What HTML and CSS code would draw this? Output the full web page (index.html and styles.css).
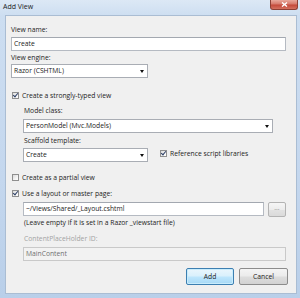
FILE: index.html
```html
<!DOCTYPE html>
<html lang="en">
<head>
    <meta charset="UTF-8">
    <meta name="viewport" content="width=device-width, initial-scale=1.0">
    <title>Add View</title>
    <link rel="stylesheet" href="styles.css">
</head>
<body>
    <div class="window">
        <div class="titlebar">
            <span class="title">Add View</span>
            <span class="close">
                <svg width="7" height="5" viewBox="0 0 7 5"><path d="M1 0.5 L6 4.5 M6 0.5 L1 4.5" stroke="#fff" stroke-width="1.4"/></svg>
            </span>
        </div>
        <div class="client">
            <div class="label first">View name:</div>
            <div class="textbox">Create</div>

            <div class="label">View engine:</div>
            <div class="select engine"><span>Razor (CSHTML)</span><i class="arrow"></i></div>

            <div class="check-row strongly">
                <span class="checkbox checked"></span>
                <span>Create a strongly-typed view</span>
            </div>

            <div class="indent">
                <div class="label model-label">Model class:</div>
                <div class="select combo"><span>PersonModel (Mvc.Models)</span><i class="arrow"></i></div>

                <div class="label">Scaffold template:</div>
                <div class="scaffold-row">
                    <div class="select scaffold"><span>Create</span><i class="arrow"></i></div>
                    <div class="check-row ref">
                        <span class="checkbox checked"></span>
                        <span>Reference script libraries</span>
                    </div>
                </div>
            </div>

            <div class="check-row partial">
                <span class="checkbox"></span>
                <span>Create as a partial view</span>
            </div>
            <div class="check-row layout">
                <span class="checkbox checked"></span>
                <span>Use a layout or master page:</span>
            </div>

            <div class="indent">
                <div class="layout-row">
                    <div class="textbox layout-box">~/Views/Shared/_Layout.cshtml</div>
                    <div class="browse">...</div>
                </div>
                <div class="label hint">(Leave empty if it is set in a Razor _viewstart file)</div>
                <div class="label disabled placeholder-label">ContentPlaceHolder ID:</div>
                <div class="textbox disabled-box">MainContent</div>
            </div>

            <div class="buttons">
                <div class="button default">Add</div>
                <div class="button">Cancel</div>
            </div>
        </div>
    </div>
</body>
</html>
```

FILE: styles.css
```css
body {
    margin: 0;
    padding: 0;
    font-family: "Open Sans", "Noto Sans", sans-serif;
    font-size: 6.75px;
    color: #222;
}

.window {
    width: 300px;
    height: 298px;
    display: flex;
    flex-direction: column;
    background: linear-gradient(to bottom, #dce8f5 0, #cddef1 16px, #c4d7ee 60%, #b9cfe9 100%);
    overflow: hidden;
}

.titlebar {
    height: 15px;
    display: flex;
    justify-content: space-between;
    align-items: flex-start;
}

.title {
    padding: 2px 0 0 3px;
    font-size: 7px;
    line-height: 10px;
    color: #1a1a1a;
}

.close {
    width: 26px;
    height: 9px;
    margin-right: 2px;
    display: flex;
    align-items: center;
    justify-content: center;
    border: 1px solid #8d4034;
    border-top: none;
    border-radius: 0 0 3px 3px;
    background: linear-gradient(to bottom, #e9a99c 0, #d77a6b 45%, #c44a3a 55%, #d4705f 100%);
}

.client {
    height: 279px;
    margin: 0 3px 4px 5px;
    padding: 9px 10px 0 5px;
    box-sizing: border-box;
    border: 1px solid #aabdd3;
    background-color: #f0f0f0;
}

.label {
    line-height: 9px;
    height: 9px;
    margin-top: 2px;
    white-space: nowrap;
}

.label.first {
    margin-top: 0;
}

.textbox {
    height: 14px;
    margin-top: 3px;
    padding: 0 2px;
    box-sizing: border-box;
    border: 1px solid #b5bac2;
    border-top-color: #a3a8b0;
    background-color: #fff;
    line-height: 12px;
    white-space: nowrap;
}

.select {
    height: 14px;
    margin-top: 2px;
    padding: 0 3px 0 2px;
    box-sizing: border-box;
    display: flex;
    justify-content: space-between;
    align-items: center;
    border: 1px solid #a9adb4;
    background-color: #fff;
    line-height: 12px;
    white-space: nowrap;
}

.select.engine {
    width: 137px;
}

.arrow {
    width: 0;
    height: 0;
    border-left: 2px solid transparent;
    border-right: 2px solid transparent;
    border-top: 3px solid #111;
}

.check-row {
    display: flex;
    align-items: flex-start;
    line-height: 9px;
    height: 9px;
    white-space: nowrap;
}

.check-row > span:last-child {
    margin-left: 3px;
}

.checkbox {
    width: 7px;
    height: 7px;
    margin-top: 1px;
    box-sizing: border-box;
    border: 1px solid #8f8f8f;
    background: linear-gradient(135deg, #dcdcdc 0, #f4f4f4 60%, #fff 100%);
    position: relative;
}

.checkbox.checked::after {
    content: "";
    position: absolute;
    left: 1px;
    top: -1px;
    width: 2px;
    height: 4px;
    border-right: 1.2px solid #2d3f66;
    border-bottom: 1.2px solid #2d3f66;
    transform: rotate(40deg);
}

.check-row.strongly {
    margin: 13px 0 0 1px;
}

.indent {
    margin-left: 12px;
}

.label.model-label {
    margin-top: 6px;
    padding-left: 1px;
}

.indent .label {
    padding-left: 1px;
    margin-top: 3px;
}

.indent .label.model-label {
    margin-top: 6px;
}

.select.combo {
    margin: 4px 13px 0 0;
}

.scaffold-row {
    display: flex;
    align-items: flex-start;
    margin-top: 3px;
}

.scaffold-row .select {
    margin-top: 0;
}

.select.scaffold {
    width: 125px;
}

.check-row.ref {
    margin: 1px 0 0 12px;
}

.check-row.partial {
    margin: 11px 0 0 1px;
}

.check-row.layout {
    margin: 7px 0 0 1px;
}

.layout-row {
    display: flex;
    gap: 4px;
    margin-top: 4px;
    height: 15px;
}

.layout-box {
    flex: 1;
    margin-top: 0;
}

.browse {
    width: 18px;
    height: 15px;
    box-sizing: border-box;
    border: 1px solid #b3b3b3;
    border-radius: 2px;
    background: linear-gradient(to bottom, #f6f6f6 0, #ececec 50%, #e2e2e2 51%, #dadada 100%);
    color: #8a8a8a;
    text-align: center;
    line-height: 10px;
}

.indent .label.hint {
    margin-top: 1px;
}

.indent .label.placeholder-label {
    margin-top: 7px;
}

.disabled {
    color: #a3a3a3;
}

.textbox.disabled-box {
    margin-top: 4px;
    border-color: #c9c9c9;
    background-color: #f2f2f2;
    color: #707070;
}

.buttons {
    display: flex;
    justify-content: flex-end;
    gap: 5px;
    margin: 7px -2px 0 0;
}

.button {
    width: 49px;
    height: 17px;
    box-sizing: border-box;
    border: 1px solid #8c8c8c;
    border-radius: 2px;
    background: linear-gradient(to bottom, #f4f4f4 0, #ebebeb 48%, #dddddd 52%, #d2d2d2 100%);
    text-align: center;
    line-height: 15px;
}

.button.default {
    width: 48px;
    border-color: #3c7fb1;
    background: linear-gradient(to bottom, #eaf6fd 0, #d9f0fc 48%, #bee6fd 52%, #a7d9f5 100%);
    box-shadow: inset 0 0 0 1px #c8ecfc;
}
```
